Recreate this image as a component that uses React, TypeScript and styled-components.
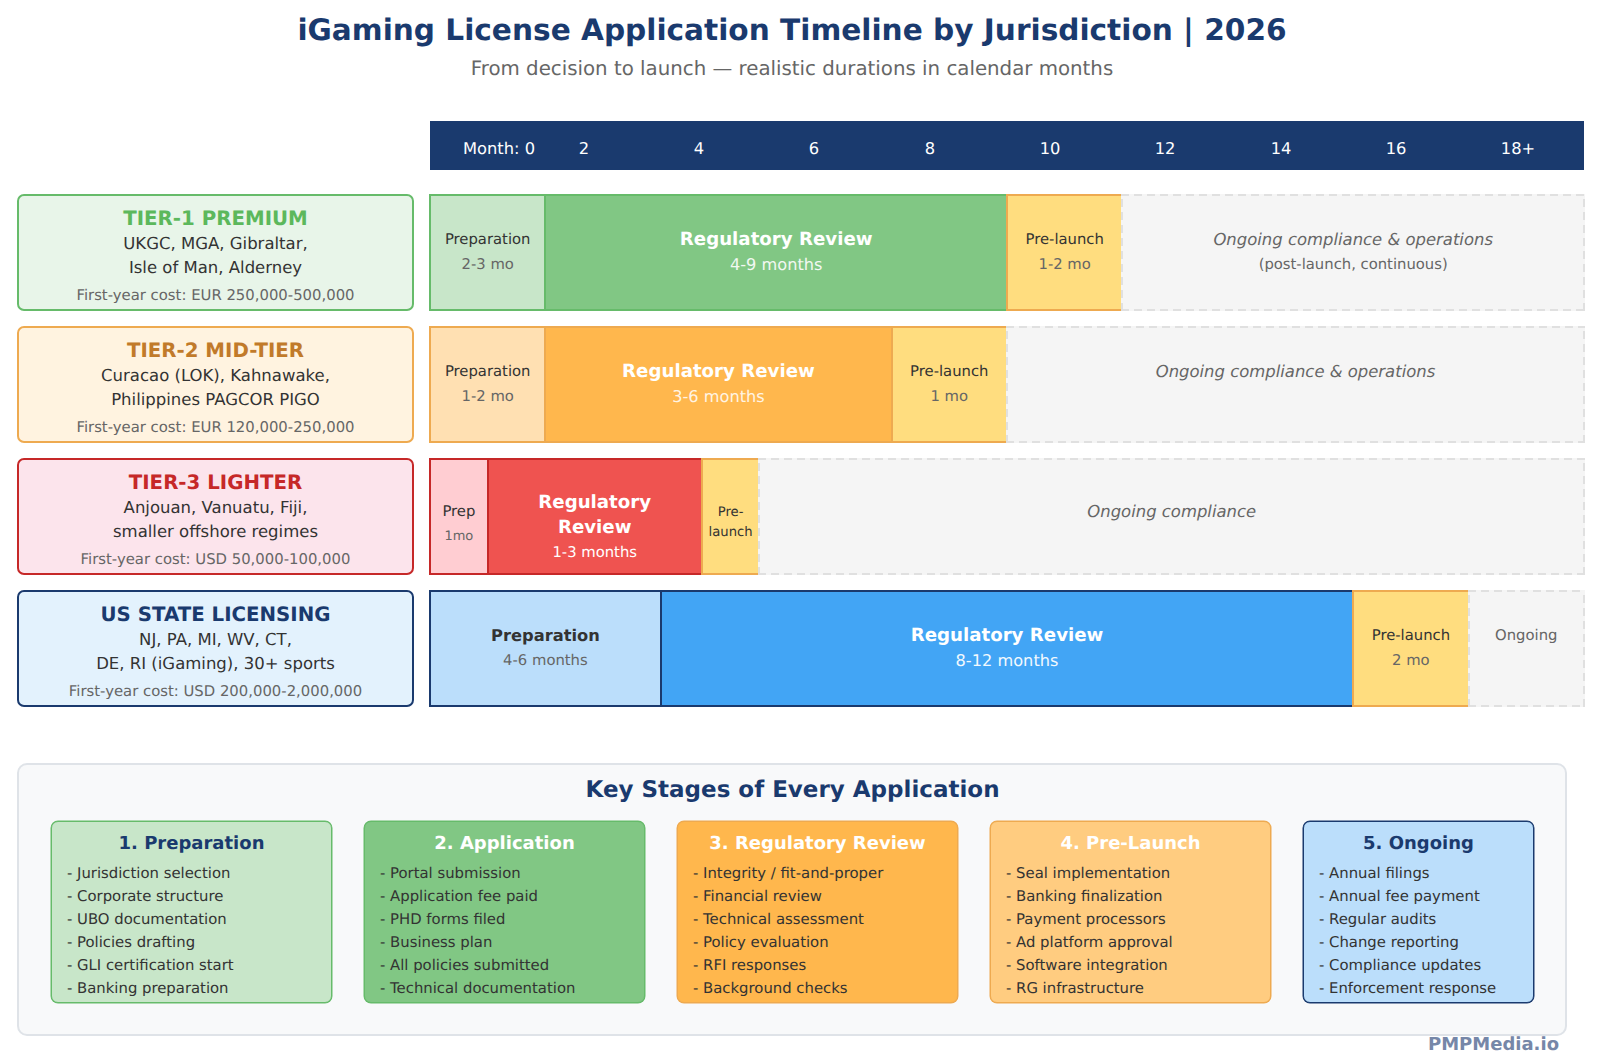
import React from 'react';
import styled, { createGlobalStyle, css } from 'styled-components';

const UNIT = 115.4;

const GlobalStyle = createGlobalStyle`
  html, body {
    margin: 0;
    padding: 0;
    background: #fff;
    font-family: "DejaVu Sans", sans-serif;
    text-rendering: geometricPrecision;
  }
  * { box-sizing: border-box; }
`;

const Page = styled.div`
  width: 1600px;
  height: 1060px;
  overflow: hidden;
  padding: 12px 16px 0 17px;
`;

const Header = styled.header`
  width: 1550px;
  text-align: center;
`;

const Title = styled.h1`
  margin: 0;
  font-size: 29.6px;
  line-height: 36px;
  font-weight: 700;
  color: #1a3a6e;
`;

const Subtitle = styled.div`
  margin-top: 9px;
  font-size: 19.8px;
  line-height: 24px;
  color: #666;
`;

const MonthBar = styled.div`
  display: flex;
  width: 1154px;
  height: 49px;
  margin: 40px 0 24px 413px;
  padding-top: 5px;
  background: #1a3a6e;
  color: #fff;
  font-size: 16.3px;
`;

const Month = styled.div<{ $w: number }>`
  flex: 0 0 ${(p) => p.$w}px;
  display: flex;
  align-items: center;
  justify-content: center;
  white-space: nowrap;
`;

const Rows = styled.div`
  display: flex;
  flex-direction: column;
  gap: 15px;
`;

const Row = styled.div`
  display: grid;
  grid-template-columns: 397px 1156px;
  column-gap: 15px;
  height: 117px;
`;

const TierCard = styled.div<{ $bg: string; $line: string }>`
  padding-top: 10px;
  background: ${(p) => p.$bg};
  border: 2px solid ${(p) => p.$line};
  border-radius: 7px;
  text-align: center;
`;

const TierName = styled.div<{ $color: string }>`
  font-size: 19.8px;
  line-height: 26px;
  font-weight: 700;
  color: ${(p) => p.$color};
`;

const TierLine = styled.div`
  font-size: 16.5px;
  line-height: 24px;
  color: #333;
`;

const TierCost = styled.div`
  margin-top: 5px;
  font-size: 14.85px;
  line-height: 20px;
  color: #666;
`;

const Track = styled.div`
  display: flex;
`;

const dash = (line: string) => css`
  background-image:
    repeating-linear-gradient(90deg, ${line} 0 8px, transparent 8px 13px),
    repeating-linear-gradient(90deg, ${line} 0 8px, transparent 8px 13px),
    repeating-linear-gradient(0deg, ${line} 0 8px, transparent 8px 13px),
    repeating-linear-gradient(0deg, ${line} 0 8px, transparent 8px 13px);
  background-size: 100% 2px, 100% 2px, 2px 100%, 2px 100%;
  background-position: 0 0, 0 100%, 0 0, 100% 0;
  background-repeat: no-repeat;
`;

const Segment = styled.div<{ $units: number; $bg: string; $line: string; $top: number; $dashed?: boolean }>`
  flex: 0 0 ${(p) => p.$units * UNIT + 2}px;
  height: 117px;
  padding-top: ${(p) => (p.$dashed ? p.$top + 2 : p.$top)}px;
  background-color: ${(p) => p.$bg};
  ${(p) => (p.$dashed ? dash(p.$line) : css`border: 2px solid ${p.$line};`)}
  text-align: center;
  &:not(:first-child) {
    margin-left: -2px;
  }
`;

const SegName = styled.div<{ $size?: number; $lh?: number; $bold?: boolean; $color?: string; $italic?: boolean }>`
  font-size: ${(p) => p.$size ?? 14.8}px;
  line-height: ${(p) => p.$lh ?? 25}px;
  font-weight: ${(p) => (p.$bold ? 700 : 400)};
  font-style: ${(p) => (p.$italic ? 'italic' : 'normal')};
  color: ${(p) => p.$color ?? '#333'};
`;

const SegNote = styled.div<{ $size?: number; $color?: string }>`
  font-size: ${(p) => p.$size ?? 14.8}px;
  line-height: 25px;
  color: ${(p) => p.$color ?? '#666'};
`;

const StagesPanel = styled.div`
  width: 1550px;
  height: 273px;
  margin-top: 56px;
  padding: 11px 31px 0 32px;
  background: #f8f9fa;
  border: 2px solid #dfe3e8;
  border-radius: 10px;
`;

const StagesTitle = styled.h2`
  margin: 0 0 17px;
  font-size: 23px;
  line-height: 28px;
  font-weight: 700;
  color: #1a3a6e;
  text-align: center;
`;

const StageRow = styled.div`
  display: flex;
  gap: 32px;
`;

const Stage = styled.div<{ $w: number; $bg: string; $line: string }>`
  flex: 0 0 ${(p) => p.$w}px;
  height: 182px;
  padding: 8px 0 0 15px;
  background: ${(p) => p.$bg};
  border: 1px solid ${(p) => p.$line};
  box-shadow: 0 0 0 0.5px ${(p) => p.$line};
  border-radius: 7px;
`;

const StageName = styled.div<{ $color: string }>`
  padding-right: 15px;
  margin-bottom: 4px;
  font-size: 18px;
  line-height: 28px;
  font-weight: 700;
  color: ${(p) => p.$color};
  text-align: center;
`;

const StageItem = styled.div`
  font-size: 14.85px;
  line-height: 23px;
  color: #333;
  white-space: nowrap;
`;

const Brand = styled.div`
  margin-top: -1px;
  padding-right: 25px;
  font-size: 18px;
  line-height: 20px;
  font-weight: 700;
  color: #7687a8;
  text-align: right;
`;

const months = [
  { label: 'Month: 0', w: 138 },
  { label: '2', w: 32 },
  { label: '4', w: 198 },
  { label: '6', w: 32 },
  { label: '8', w: 200 },
  { label: '10', w: 40 },
  { label: '12', w: 190 },
  { label: '14', w: 42 },
  { label: '16', w: 188 },
  { label: '18+', w: 56 },
];

const GREEN_LINE = '#66bb6a';
const YELLOW = '#ffdd7f';
const ORANGE_LINE = '#eeaa50';
const GREY = '#f5f5f5';
const GREY_LINE = '#e0e0e0';

const stages = [
  {
    w: 281, bg: '#c8e6c9', line: GREEN_LINE, color: '#1a3a6e', name: '1. Preparation',
    items: ['Jurisdiction selection', 'Corporate structure', 'UBO documentation', 'Policies drafting', 'GLI certification start', 'Banking preparation'],
  },
  {
    w: 281, bg: '#81c784', line: GREEN_LINE, color: '#fff', name: '2. Application',
    items: ['Portal submission', 'Application fee paid', 'PHD forms filed', 'Business plan', 'All policies submitted', 'Technical documentation'],
  },
  {
    w: 281, bg: '#ffb74d', line: ORANGE_LINE, color: '#fff', name: '3. Regulatory Review',
    items: ['Integrity / fit-and-proper', 'Financial review', 'Technical assessment', 'Policy evaluation', 'RFI responses', 'Background checks'],
  },
  {
    w: 281, bg: '#ffcc80', line: ORANGE_LINE, color: '#fff', name: '4. Pre-Launch',
    items: ['Seal implementation', 'Banking finalization', 'Payment processors', 'Ad platform approval', 'Software integration', 'RG infrastructure'],
  },
  {
    w: 231, bg: '#bbdefb', line: '#1a3a6e', color: '#1a3a6e', name: '5. Ongoing',
    items: ['Annual filings', 'Annual fee payment', 'Regular audits', 'Change reporting', 'Compliance updates', 'Enforcement response'],
  },
];

export default function App() {
  return (
    <>
      <GlobalStyle />
      <Page>
        <Header>
          <Title>iGaming License Application Timeline by Jurisdiction | 2026</Title>
          <Subtitle>From decision to launch — realistic durations in calendar months</Subtitle>
        </Header>

        <MonthBar>
          {months.map((m) => (
            <Month key={m.label} $w={m.w}>{m.label}</Month>
          ))}
        </MonthBar>

        <Rows>
          <Row>
            <TierCard $bg="#e8f5e9" $line={GREEN_LINE}>
              <TierName $color="#5cb85c">TIER-1 PREMIUM</TierName>
              <TierLine>UKGC, MGA, Gibraltar,</TierLine>
              <TierLine>Isle of Man, Alderney</TierLine>
              <TierCost>First-year cost: EUR 250,000-500,000</TierCost>
            </TierCard>
            <Track>
              <Segment $units={1} $bg="#c8e6c9" $line={GREEN_LINE} $top={31}>
                <SegName>Preparation</SegName>
                <SegNote>2-3 mo</SegNote>
              </Segment>
              <Segment $units={4} $bg="#81c784" $line={GREEN_LINE} $top={31}>
                <SegName $size={18.2} $bold $color="#fff">Regulatory Review</SegName>
                <SegNote $size={16.2} $color="#f2f8f2">4-9 months</SegNote>
              </Segment>
              <Segment $units={1} $bg={YELLOW} $line={ORANGE_LINE} $top={31}>
                <SegName>Pre-launch</SegName>
                <SegNote>1-2 mo</SegNote>
              </Segment>
              <Segment $units={4} $bg={GREY} $line={GREY_LINE} $top={31} $dashed>
                <SegName $size={16.45} $italic $color="#666">Ongoing compliance &amp; operations</SegName>
                <SegNote>(post-launch, continuous)</SegNote>
              </Segment>
            </Track>
          </Row>

          <Row>
            <TierCard $bg="#fff3e0" $line={ORANGE_LINE}>
              <TierName $color="#c17a2a">TIER-2 MID-TIER</TierName>
              <TierLine>Curacao (LOK), Kahnawake,</TierLine>
              <TierLine>Philippines PAGCOR PIGO</TierLine>
              <TierCost>First-year cost: EUR 120,000-250,000</TierCost>
            </TierCard>
            <Track>
              <Segment $units={1} $bg="#ffe0b2" $line={ORANGE_LINE} $top={31}>
                <SegName>Preparation</SegName>
                <SegNote>1-2 mo</SegNote>
              </Segment>
              <Segment $units={3} $bg="#ffb74d" $line={ORANGE_LINE} $top={31}>
                <SegName $size={18.2} $bold $color="#fff">Regulatory Review</SegName>
                <SegNote $size={16.2} $color="#fff4e4">3-6 months</SegNote>
              </Segment>
              <Segment $units={1} $bg={YELLOW} $line={ORANGE_LINE} $top={31}>
                <SegName>Pre-launch</SegName>
                <SegNote>1 mo</SegNote>
              </Segment>
              <Segment $units={5} $bg={GREY} $line={GREY_LINE} $top={31} $dashed>
                <SegName $size={16.45} $italic $color="#666">Ongoing compliance &amp; operations</SegName>
              </Segment>
            </Track>
          </Row>

          <Row>
            <TierCard $bg="#fce4ec" $line="#c62828">
              <TierName $color="#c62828">TIER-3 LIGHTER</TierName>
              <TierLine>Anjouan, Vanuatu, Fiji,</TierLine>
              <TierLine>smaller offshore regimes</TierLine>
              <TierCost>First-year cost: USD 50,000-100,000</TierCost>
            </TierCard>
            <Track>
              <Segment $units={0.5} $bg="#ffcdd2" $line="#c62828" $top={39}>
                <SegName>Prep</SegName>
                <SegNote $size={13}>1mo</SegNote>
              </Segment>
              <Segment $units={1.855} $bg="#ef5350" $line="#c62828" $top={30}>
                <SegName $size={18.2} $bold $color="#fff">Regulatory</SegName>
                <SegName $size={18.2} $bold $color="#fff">Review</SegName>
                <SegNote $size={14.8} $color="#fff">1-3 months</SegNote>
              </Segment>
              <Segment $units={0.5} $bg={YELLOW} $line={ORANGE_LINE} $top={43}>
                <SegName $size={13.2} $lh={20}>Pre-</SegName>
                <SegName $size={13.2} $lh={20}>launch</SegName>
              </Segment>
              <Segment $units={7.145} $bg={GREY} $line={GREY_LINE} $top={39} $dashed>
                <SegName $size={16.45} $italic $color="#666">Ongoing compliance</SegName>
              </Segment>
            </Track>
          </Row>

          <Row>
            <TierCard $bg="#e3f2fd" $line="#1a3a6e">
              <TierName $color="#1a3a6e">US STATE LICENSING</TierName>
              <TierLine>NJ, PA, MI, WV, CT,</TierLine>
              <TierLine>DE, RI (iGaming), 30+ sports</TierLine>
              <TierCost>First-year cost: USD 200,000-2,000,000</TierCost>
            </TierCard>
            <Track>
              <Segment $units={2} $bg="#bbdefb" $line="#1a3a6e" $top={31}>
                <SegName $size={16.3} $bold>Preparation</SegName>
                <SegNote>4-6 months</SegNote>
              </Segment>
              <Segment $units={6} $bg="#42a5f5" $line="#1a3a6e" $top={31}>
                <SegName $size={18.2} $bold $color="#fff">Regulatory Review</SegName>
                <SegNote $size={16.2} $color="#f2f9fe">8-12 months</SegNote>
              </Segment>
              <Segment $units={1} $bg={YELLOW} $line={ORANGE_LINE} $top={31}>
                <SegName>Pre-launch</SegName>
                <SegNote>2 mo</SegNote>
              </Segment>
              <Segment $units={1} $bg={GREY} $line={GREY_LINE} $top={31} $dashed>
                <SegName $color="#666">Ongoing</SegName>
              </Segment>
            </Track>
          </Row>
        </Rows>

        <StagesPanel>
          <StagesTitle>Key Stages of Every Application</StagesTitle>
          <StageRow>
            {stages.map((s) => (
              <Stage key={s.name} $w={s.w} $bg={s.bg} $line={s.line}>
                <StageName $color={s.color}>{s.name}</StageName>
                {s.items.map((item) => (
                  <StageItem key={item}>- {item}</StageItem>
                ))}
              </Stage>
            ))}
          </StageRow>
        </StagesPanel>
        <Brand>PMPMedia.io</Brand>
      </Page>
    </>
  );
}
